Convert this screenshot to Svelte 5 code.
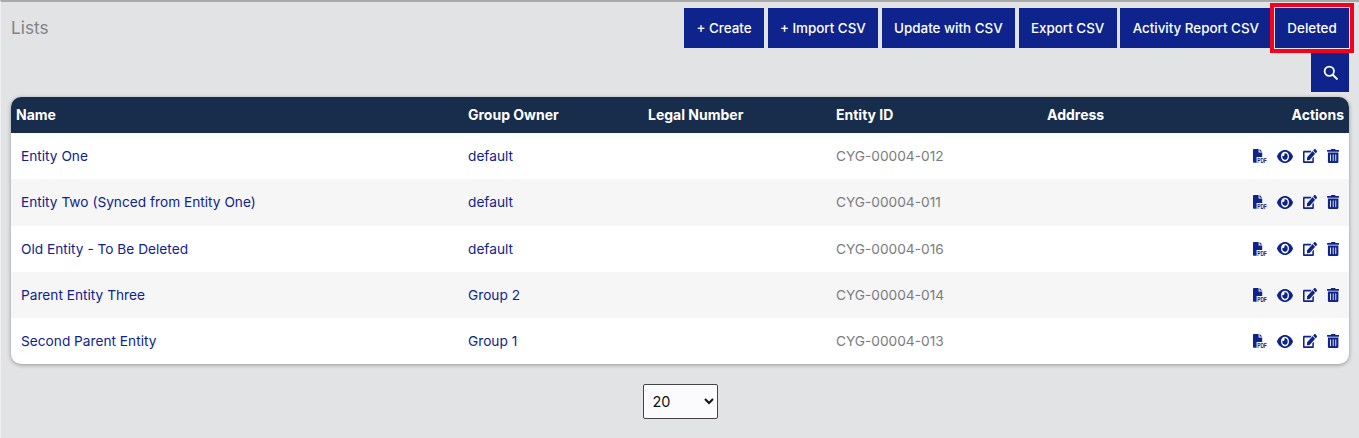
<script>
  const buttons = ['+ Create', '+ Import CSV', 'Update with CSV', 'Export CSV', 'Activity Report CSV', 'Deleted'];

  const entities = [
    { name: 'Entity One', group: 'default', id: 'CYG-00004-012' },
    { name: 'Entity Two (Synced from Entity One)', group: 'default', id: 'CYG-00004-011' },
    { name: 'Old Entity - To Be Deleted', group: 'default', id: 'CYG-00004-016' },
    { name: 'Parent Entity Three', group: 'Group 2', id: 'CYG-00004-014' },
    { name: 'Second Parent Entity', group: 'Group 1', id: 'CYG-00004-013' }
  ];
</script>

<div class="page">
  <div class="top">
    <h1>Lists</h1>
    <div class="toolbar">
      <div class="buttons">
        {#each buttons as label}
          <button type="button" class:marked={label === 'Deleted'}>{label}</button>
        {/each}
      </div>
      <button type="button" class="search" aria-label="Search">
        <svg viewBox="0 0 16 16" width="15" height="15">
          <circle cx="6.7" cy="6.7" r="5" fill="none" stroke="currentColor" stroke-width="1.9" />
          <path d="M10.4 10.4L14.8 14.8" stroke="currentColor" stroke-width="2.2" stroke-linecap="round" />
        </svg>
      </button>
    </div>
  </div>

  <div class="card">
    <table>
      <colgroup>
        <col class="c-name" />
        <col class="c-group" />
        <col class="c-legal" />
        <col class="c-id" />
        <col class="c-address" />
        <col />
      </colgroup>
      <thead>
        <tr>
          <th>Name</th>
          <th>Group Owner</th>
          <th>Legal Number</th>
          <th>Entity ID</th>
          <th>Address</th>
          <th class="right">Actions</th>
        </tr>
      </thead>
      <tbody>
        {#each entities as entity}
          <tr>
            <td class="link first">{entity.name}</td>
            <td class="link">{entity.group}</td>
            <td></td>
            <td class="muted">{entity.id}</td>
            <td></td>
            <td>
              <div class="actions">
                <svg class="pdf" viewBox="0 0 14 14" width="14" height="14">
                  <path d="M1 0H5.6V3.4H9.2V8H3.6V13.8H1C.4 13.8 0 13.4 0 12.8V1C0 .4 .4 0 1 0ZM6.6 0L9.2 2.5H6.6Z" fill="currentColor" />
                  <text x="4.2" y="13.8" font-size="6.8" font-weight="700" textLength="9.6" lengthAdjust="spacingAndGlyphs">PDF</text>
                </svg>
                <svg class="eye" viewBox="0 64 576 384" width="16" height="13" preserveAspectRatio="none">
                  <path fill="currentColor" d="M572.52 241.4C518.29 135.59 410.93 64 288 64S57.68 135.64 3.48 241.41a32.35 32.35 0 0 0 0 29.19C57.71 376.41 165.07 448 288 448s230.32-71.64 284.52-177.41a32.35 32.35 0 0 0 0-29.19zM288 400a144 144 0 1 1 144-144 143.93 143.93 0 0 1-144 144zm0-240a95.31 95.31 0 0 0-25.31 3.79 47.85 47.85 0 0 1-66.9 66.9A95.78 95.78 0 1 0 288 160z" />
                </svg>
                <svg viewBox="0 0 576 512" width="14" height="14" preserveAspectRatio="none">
                  <path fill="currentColor" d="M402.6 83.2l90.2 90.2c3.8 3.8 3.8 10 0 13.8L274.4 405.6l-92.8 10.3c-12.4 1.4-22.9-9.1-21.5-21.5l10.3-92.8L388.8 83.2c3.8-3.8 10-3.8 13.8 0zm162-22.9l-48.8-48.8c-15.2-15.2-39.9-15.2-55.2 0l-35.4 35.4c-3.8 3.8-3.8 10 0 13.8l90.2 90.2c3.8 3.8 10 3.8 13.8 0l35.4-35.4c15.2-15.3 15.2-40 0-55.2zM384 346.2V448H64V128h229.8c3.2 0 6.2-1.3 8.5-3.5l40-40c7.6-7.6 2.2-20.5-8.5-20.5H48C21.5 64 0 85.5 0 112v352c0 26.5 21.5 48 48 48h352c26.5 0 48-21.5 48-48V306.2c0-10.7-12.9-16-20.5-8.5l-40 40c-2.2 2.3-3.5 5.3-3.5 8.5z" />
                </svg>
                <svg viewBox="0 0 448 512" width="12.3" height="14">
                  <path fill="currentColor" d="M32 464a48 48 0 0 0 48 48h288a48 48 0 0 0 48-48V128H32zm272-256a16 16 0 0 1 32 0v224a16 16 0 0 1-32 0zm-96 0a16 16 0 0 1 32 0v224a16 16 0 0 1-32 0zm-96 0a16 16 0 0 1 32 0v224a16 16 0 0 1-32 0zM432 32H312l-9.4-18.7A24 24 0 0 0 281.1 0H166.8a23.72 23.72 0 0 0-21.4 13.3L136 32H16A16 16 0 0 0 0 48v32a16 16 0 0 0 16 16h416a16 16 0 0 0 16-16V48a16 16 0 0 0-16-16z" />
                </svg>
              </div>
            </td>
          </tr>
        {/each}
      </tbody>
    </table>
  </div>

  <div class="pager">
    <select>
      <option>20</option>
      <option>50</option>
      <option>100</option>
    </select>
  </div>
</div>

<style>
  :global(body) { margin: 0; background: #e2e3e5; }
  .page { box-sizing: border-box; height: 438px; overflow: hidden; padding: 6px 10px 0 11px; border-top: 2px solid #a9a9aa; border-left: 1px solid #f0f0f1; font-family: Inter, "Liberation Sans", sans-serif; font-size: 13.7px; color: #0e248c; }
  .top { display: flex; justify-content: space-between; align-items: flex-start; height: 89px; margin-left: -1px; }
  h1 { margin: 8px 0 0; font-size: 17.2px; line-height: 24px; font-weight: 400; color: #808285; }
  .toolbar { display: flex; flex-direction: column; align-items: flex-end; }
  .buttons { display: flex; gap: 3.7px; }
  button { height: 40px; padding: 0 12.3px; border: 0; background: #0e248c; color: #fff; font: 500 13.4px Inter, "Liberation Sans", sans-serif; white-space: nowrap; }
  .marked { outline: 4px solid #f5001e; outline-offset: 1px; }
  .search { width: 38px; height: 39px; margin-top: 5px; padding: 0; display: flex; align-items: center; justify-content: center; }
  .card { margin-left: -1px; border-radius: 10px; overflow: hidden; background: #fff; box-shadow: 0 1px 4px rgba(0, 0, 0, 0.35); }
  table { width: 100%; border-collapse: collapse; table-layout: fixed; }
  .c-name { width: 452px; }
  .c-group { width: 180px; }
  .c-legal { width: 188px; }
  .c-id { width: 211px; }
  .c-address { width: 200px; }
  th { box-sizing: border-box; height: 36px; padding: 0 5px 2px; background: #182c4b; color: #fff; font-size: 14px; font-weight: 700; text-align: left; }
  th.right { text-align: right; }
  td { box-sizing: border-box; height: 46.3px; padding: 0 5px; font-size: 13.7px; }
  td.first { padding-left: 10px; }
  tbody tr:nth-child(even) { background: #f6f6f6; }
  .muted { color: #7a7c80; }
  .actions { display: flex; justify-content: flex-end; align-items: center; gap: 10px; padding-right: 5px; }
  .pdf { overflow: visible; }
  .pdf text { font-family: "Liberation Sans", sans-serif; fill: currentColor; }
  .pager { display: flex; justify-content: center; margin-top: 20px; margin-right: 1px; }
  select { box-sizing: border-box; width: 75px; height: 35px; padding: 0 4px 0 5px; border: 1px solid #444; border-radius: 2px; background-color: #fbfbfe; font: 14.5px Inter, "Liberation Sans", sans-serif; color: #111; }
</style>
